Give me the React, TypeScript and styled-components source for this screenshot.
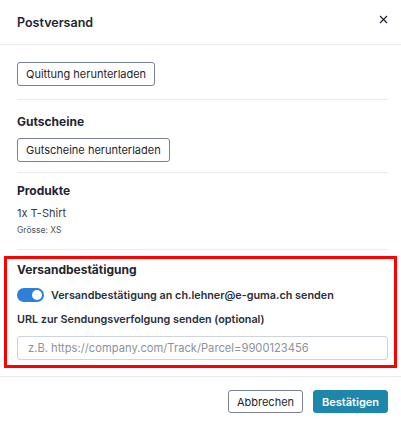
import React, { useState } from 'react';
import styled, { createGlobalStyle } from 'styled-components';

const colors = {
  text: '#1f2430',
  muted: '#6b7280',
  border: '#e8eaef',
  buttonBorder: '#7b8291',
  primary: '#1c87ab',
  toggle: '#2e7fd6',
  highlight: '#ff0000',
};

const GlobalStyle = createGlobalStyle`
  body {
    margin: 0;
    background: #fff;
    font-family: Inter, "Noto Sans", sans-serif;
    color: ${colors.text};
  }
`;

const Modal = styled.div`
  width: 401px;
  background: #fff;
`;

const Header = styled.div`
  height: 44px;
  padding: 0 17px;
  display: flex;
  align-items: center;
  justify-content: space-between;
  border-bottom: 1px solid ${colors.border};
`;

const Title = styled.h2`
  margin: 0;
  font-size: 12.5px;
  font-weight: 600;
`;

const CloseButton = styled.button`
  border: 0;
  background: none;
  padding: 0;
  margin: 0 -6px 5px 0;
  width: 14px;
  height: 14px;
  display: flex;
  align-items: center;
  justify-content: center;
  color: ${colors.text};
  cursor: pointer;
`;

const Body = styled.div`
  padding: 17px 13px 0 17px;
`;

const Section = styled.section<{ $top?: number; $bottom: number }>`
  margin-top: ${(p) => p.$top ?? 0}px;
  padding-bottom: ${(p) => p.$bottom}px;
  border-bottom: 1px solid ${colors.border};
`;

const Highlighted = styled.section`
  margin: 6px -9px 0 -13px;
  border: 3px solid ${colors.highlight};
  padding: 1px 6px 5px 10px;
`;

const Heading = styled.h3<{ $gap?: number }>`
  margin: 0 0 ${(p) => p.$gap ?? 6}px;
  font-size: 12px;
  font-weight: 700;
  line-height: 20px;
`;

const OutlineButton = styled.button`
  height: 24px;
  padding: 0 8px;
  font-family: Inter, "Noto Sans", sans-serif;
  font-size: 11px;
  color: ${colors.text};
  background: #fff;
  border: 1px solid ${colors.buttonBorder};
  border-radius: 3px;
  cursor: pointer;
`;

const FooterButton = styled(OutlineButton)`
  height: 23px;
  padding: 0 8px;
`;

const PrimaryButton = styled(FooterButton)`
  background: ${colors.primary};
  border-color: ${colors.primary};
  color: #fff;
  font-weight: 600;
`;

const ItemName = styled.div`
  margin-top: 5px;
  font-size: 11px;
  line-height: 15px;
  color: #363b46;
`;

const ItemMeta = styled.div`
  margin-top: 2px;
  font-size: 8.5px;
  line-height: 14px;
  color: #4b5160;
`;

const ToggleRow = styled.label`
  display: flex;
  align-items: center;
  gap: 7px;
  height: 14px;
  font-size: 10.8px;
  font-weight: 600;
  color: #2a2f3a;
  margin-bottom: 11px;
  cursor: pointer;
`;

const Toggle = styled.span<{ $on: boolean }>`
  position: relative;
  width: 27px;
  height: 14px;
  border-radius: 7px;
  background: ${(p) => (p.$on ? colors.toggle : '#c7ccd4')};
  flex-shrink: 0;
  &::after {
    content: '';
    position: absolute;
    top: 2px;
    left: ${(p) => (p.$on ? '15px' : '2px')};
    width: 10px;
    height: 10px;
    border-radius: 50%;
    background: #fff;
  }
`;

const FieldLabel = styled.div`
  font-size: 10.8px;
  line-height: 14px;
  font-weight: 600;
  color: #2a2f3a;
  margin-bottom: 9px;
`;

const Input = styled.input`
  display: block;
  box-sizing: border-box;
  width: 371px;
  height: 24px;
  padding: 0 10px;
  font-family: Inter, "Noto Sans", sans-serif;
  font-size: 11.2px;
  border: 1px solid #cfd3da;
  border-radius: 3px;
  &::placeholder {
    color: #8c929d;
  }
`;

const Footer = styled.div`
  margin-top: 8px;
  border-top: 1px solid ${colors.border};
  padding: 13px 13px 12px;
  display: flex;
  justify-content: flex-end;
  gap: 10px;
`;

export default function App() {
  const [notify, setNotify] = useState(true);

  return (
    <>
      <GlobalStyle />
      <Modal>
        <Header>
          <Title>Postversand</Title>
          <CloseButton aria-label="Schliessen">
            <svg width="9" height="9" viewBox="0 0 9 9">
              <path d="M1 1L8 8M8 1L1 8" stroke="currentColor" strokeWidth="1.2" />
            </svg>
          </CloseButton>
        </Header>
        <Body>
          <Section $bottom={13}>
            <OutlineButton>Quittung herunterladen</OutlineButton>
          </Section>
          <Section $top={12} $bottom={10}>
            <Heading>Gutscheine</Heading>
            <OutlineButton>Gutscheine herunterladen</OutlineButton>
          </Section>
          <Section $top={8} $bottom={12}>
            <Heading $gap={0}>Produkte</Heading>
            <ItemName>1x T-Shirt</ItemName>
            <ItemMeta>Grösse: XS</ItemMeta>
          </Section>
          <Highlighted>
            <Heading $gap={8}>Versandbestätigung</Heading>
            <ToggleRow onClick={() => setNotify(!notify)}>
              <Toggle $on={notify} />
              Versandbestätigung an ch.lehner@e-guma.ch senden
            </ToggleRow>
            <FieldLabel>URL zur Sendungsverfolgung senden (optional)</FieldLabel>
            <Input placeholder="z.B. https://company.com/Track/Parcel=9900123456" />
          </Highlighted>
        </Body>
        <Footer>
          <FooterButton>Abbrechen</FooterButton>
          <PrimaryButton>Bestätigen</PrimaryButton>
        </Footer>
      </Modal>
    </>
  );
}
